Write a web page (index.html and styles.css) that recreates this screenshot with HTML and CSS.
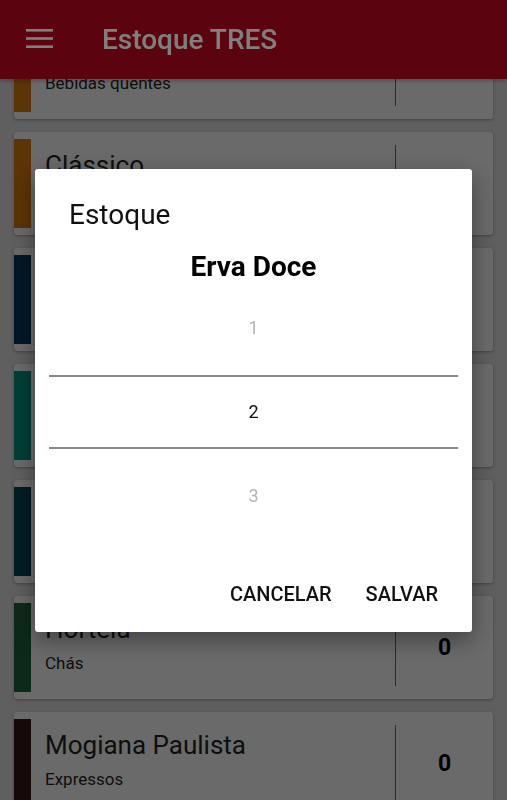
FILE: index.html
```html
<!DOCTYPE html>
<html lang="pt-BR">
<head>
    <meta charset="UTF-8">
    <meta name="viewport" content="width=device-width, initial-scale=1.0">
    <title>Estoque TRES</title>
    <link rel="stylesheet" href="styles.css">
</head>
<body>
    <header class="toolbar">
        <svg class="menu-icon" width="27" height="19" viewBox="0 0 27 19">
            <rect x="0" y="0" width="27" height="2.6" fill="#fff"/>
            <rect x="0" y="8.2" width="27" height="2.6" fill="#fff"/>
            <rect x="0" y="16.4" width="27" height="2.6" fill="#fff"/>
        </svg>
        <h1>Estoque TRES</h1>
    </header>

    <main class="list">
        <div class="card">
            <div class="strip orange"></div>
            <div class="info">
                <div class="name">Cappuccino</div>
                <div class="category">Bebidas quentes</div>
            </div>
            <div class="count">0</div>
        </div>
        <div class="card">
            <div class="strip orange"></div>
            <div class="info">
                <div class="name">Clássico</div>
                <div class="category">Expressos</div>
            </div>
            <div class="count">0</div>
        </div>
        <div class="card">
            <div class="strip navy"></div>
            <div class="info">
                <div class="name">Descafeinado</div>
                <div class="category">Expressos</div>
            </div>
            <div class="count">0</div>
        </div>
        <div class="card">
            <div class="strip teal"></div>
            <div class="info">
                <div class="name">Erva Doce</div>
                <div class="category">Chás</div>
            </div>
            <div class="count">2</div>
        </div>
        <div class="card">
            <div class="strip deep"></div>
            <div class="info">
                <div class="name">Frutas Vermelhas</div>
                <div class="category">Chás</div>
            </div>
            <div class="count">0</div>
        </div>
        <div class="card">
            <div class="strip green"></div>
            <div class="info">
                <div class="name">Hortelã</div>
                <div class="category">Chás</div>
            </div>
            <div class="count">0</div>
        </div>
        <div class="card">
            <div class="strip brown"></div>
            <div class="info">
                <div class="name">Mogiana Paulista</div>
                <div class="category">Expressos</div>
            </div>
            <div class="count">0</div>
        </div>
    </main>

    <div class="scrim">
        <div class="dialog">
            <h2>Estoque</h2>
            <p class="product">Erva Doce</p>
            <div class="picker">
                <div class="picker-row faded">1</div>
                <div class="picker-row current">2</div>
                <div class="picker-row faded">3</div>
            </div>
            <div class="actions">
                <button>CANCELAR</button>
                <button>SALVAR</button>
            </div>
        </div>
    </div>
</body>
</html>
```

FILE: styles.css
```css
body {
    margin: 0;
    height: 800px;
    overflow: hidden;
    font-family: 'Roboto', 'Noto Sans', sans-serif;
    background-color: #bebec0;
}

.toolbar {
    position: fixed;
    top: 0;
    left: 0;
    right: 0;
    height: 79px;
    z-index: 2;
    display: flex;
    align-items: center;
    background-color: #b6081e;
    box-shadow: 0px 2px 4px rgba(0, 0, 0, 0.25);
}

.menu-icon {
    margin-left: 26px;
    margin-top: -2px;
}

.toolbar h1 {
    margin: 0 0 0 49px;
    font-size: 28px;
    font-weight: 500;
    color: #fff;
}

.list {
    padding: 16px 14px 0;
    display: flex;
    flex-direction: column;
    gap: 13px;
}

.card {
    height: 103px;
    flex-shrink: 0;
    display: flex;
    background-color: #d5d5d5;
    border-radius: 3px;
    box-shadow: 0px 1px 3px rgba(0, 0, 0, 0.3);
}

.strip {
    width: 17px;
    margin: 7px 0;
}

.orange { background-color: #b8680c; }
.navy { background-color: #003050; }
.teal { background-color: #007e6c; }
.deep { background-color: #003846; }
.green { background-color: #185434; }
.brown { background-color: #2a1212; }

.info {
    flex: 1;
    padding: 18px 0 0 14px;
    color: #1c1c1c;
}

.name {
    font-size: 26px;
    line-height: 30px;
}

.category {
    margin-top: 9px;
    font-size: 17px;
    line-height: 20px;
}

.count {
    width: 97px;
    margin: 13px 0;
    border-left: 1px solid #b03030;
    display: flex;
    justify-content: center;
    align-items: center;
    font-size: 23px;
    font-weight: 700;
    color: #000;
}

.scrim {
    position: fixed;
    inset: 0;
    z-index: 3;
    background-color: rgba(0, 0, 0, 0.5);
    display: flex;
    justify-content: center;
    align-items: center;
}

.dialog {
    width: 437px;
    height: 463px;
    background-color: #fff;
    border-radius: 3px;
    box-shadow: 0px 8px 24px rgba(0, 0, 0, 0.4);
    display: flex;
    flex-direction: column;
}

.dialog h2 {
    margin: 30px 34px 0;
    font-size: 28px;
    line-height: 32px;
    font-weight: 400;
    color: #111;
}

.product {
    margin: 20px 0 0;
    text-align: center;
    font-size: 28px;
    line-height: 32px;
    font-weight: 700;
    color: #000;
}

.picker {
    margin: 3px 14px 0;
}

.picker-row {
    height: 84px;
    display: flex;
    justify-content: center;
    align-items: center;
    font-size: 18px;
    color: #111;
}

.picker-row.faded {
    color: #b4b4b4;
}

.picker-row.current {
    height: 70px;
    margin: 5px 0;
    border-top: 2px solid #888;
    border-bottom: 2px solid #888;
}

.actions {
    margin-top: auto;
    padding: 0 23px 14px 0;
    display: flex;
    justify-content: flex-end;
    gap: 12px;
}

button {
    height: 48px;
    padding: 0 11px;
    border: none;
    background: none;
    font-family: 'Roboto', sans-serif;
    font-size: 20px;
    font-weight: 500;
    color: #111;
}
```
